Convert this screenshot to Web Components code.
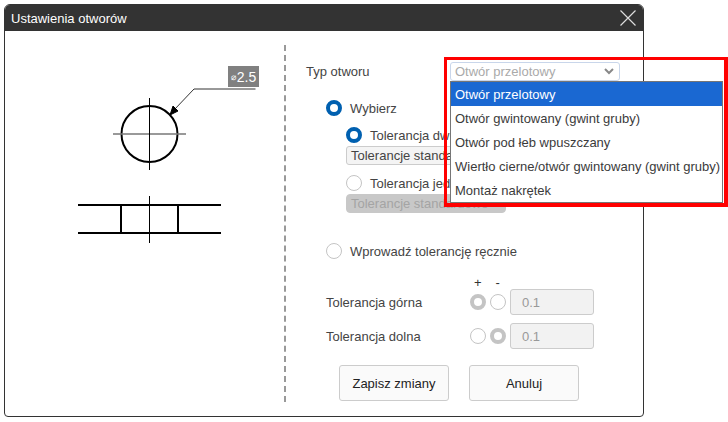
<!DOCTYPE html>
<html lang="pl">
<head>
<meta charset="utf-8">
<title>Ustawienia otworów</title>
<style>
  html, body { margin: 0; padding: 0; background: #fff; }
  body { font: 13px "Liberation Sans", Arial, sans-serif; color: #333; }
</style>
</head>
<body>
<template id="radio-tpl">
  <style>
    :host { display: flex; align-items: center; gap: 8px; height: 16px; color: #444; white-space: nowrap; }
    .dot { box-sizing: border-box; width: 16px; height: 16px; border-radius: 50%; background: #fff; border: 1px solid #c4c4c4; flex: none; }
    :host([on]) .dot { border: 4px solid #0060b0; }
    :host([on][off-color]) .dot { border-color: #c4c4c4; }
  </style>
  <span class="dot"></span><slot></slot>
</template>

<template id="select-tpl">
  <style>
    :host { display: flex; align-items: center; box-sizing: border-box; height: 19px; padding: 0 4px; border: 1px solid #ccc; border-radius: 3px; background: #f4f4f4; color: #444; white-space: nowrap; overflow: hidden; position: relative; }
    :host([variant="muted"]) { background: #fff; border-color: #c9d6ea; color: #aaa; }
    :host([variant="off"]) { background: #c8c8c8; border-color: #c8c8c8; border-radius: 4px; color: #a4a4a4; }
    svg { position: absolute; right: 5px; top: 5px; }
  </style>
  <slot></slot>
  <svg width="10" height="7" viewBox="0 0 10 7" fill="none" stroke="#888" stroke-width="2"><path d="M1 1l4 4 4-4"/></svg>
</template>

<template id="menu-tpl">
  <style>
    :host { display: block; box-sizing: border-box; position: absolute; left: 450px; top: 81px; z-index: 1; width: 273px; border: 1px solid #767676; background: #fff; color: #3b3b3b; }
  </style>
  <slot></slot>
</template>

<template id="item-tpl">
  <style>
    :host { display: flex; align-items: center; height: 24px; padding: 0 4px; white-space: nowrap; }
    :host([active]) { background: #1a68d2; color: #fff; }
  </style>
  <slot></slot>
</template>

<template id="mark-tpl">
  <style>
    :host { display: block; box-sizing: border-box; position: absolute; left: 444px; top: 57px; z-index: 2; width: 284px; height: 150px; border: solid #f00; border-width: 3px 4px 4px 3px; pointer-events: none; }
  </style>
</template>

<template id="row-tpl">
  <style>
    :host { display: flex; align-items: center; height: 26px; margin-left: 20px; color: #444; }
    .name { width: 144px; }
    .pair { display: flex; gap: 4px; margin-right: 4px; }
    .val { box-sizing: border-box; width: 84px; height: 26px; padding: 0 11px; display: flex; align-items: center; border: 1px solid #ccc; border-radius: 3px; background: #f2f2f2; color: #999; }
    ::slotted(hole-radio) { gap: 0; }
  </style>
  <span class="name"><slot></slot></span>
  <span class="pair"><slot name="radios"></slot></span>
  <span class="val"><slot name="value"></slot></span>
</template>

<template id="drawing-tpl">
  <style>
    :host { display: block; position: relative; width: 279px; height: 357px; flex: none; }
    svg { display: block; }
    .tag { position: absolute; left: 223px; top: 21px; width: 31px; height: 21px; display: flex; align-items: center; justify-content: center; background: #808080; color: #fff; font-size: 14px; }
    .tag i { font-style: normal; font-size: 9px; margin-right: 1px; }
  </style>
  <svg width="279" height="357" viewBox="5 45 279 357" fill="none">
    <path d="M255.500 89H194L174 110" stroke="#333"/>
    <path d="M170 115L173 106L178 111Z" fill="#000" stroke="#000"/>
    <circle cx="149.500" cy="134" r="28" stroke="#000" stroke-width="2"/>
    <path d="M113 134H186" stroke="#777" stroke-width="1.500"/>
    <path d="M149.500 98V170" stroke="#000"/>
    <path d="M78 205H221M78 233H221" stroke="#000" stroke-width="2"/>
    <rect x="121" y="205" width="57" height="28" stroke="#000" stroke-width="2"/>
    <path d="M149.500 196V243" stroke="#000"/>
  </svg>
  <span class="tag"><i>⌀</i>2.5</span>
</template>

<template id="dialog-tpl">
  <style>
    :host { display: block; box-sizing: border-box; width: 640px; height: 413px; margin: 4px 0 0 4px; border: 1px solid #333; border-radius: 6px 6px 4px 4px; background: #fff; overflow: hidden; }
    header { display: flex; align-items: center; justify-content: space-between; height: 26px; padding: 0 7px 0 6px; background: #333; color: #fff; }
    header svg { display: block; }
    .body { display: flex; box-sizing: border-box; height: 385px; padding-top: 14px; }
    .rule { flex: none; width: 0; height: 357px; border-left: 2px dashed #999; }
    .form { flex: 1; padding-left: 20px; }
    .typ { display: flex; align-items: center; justify-content: space-between; width: 314px; height: 19px; margin-top: 17px; color: #444; }
    .typ hole-select { width: 170px; }
    .group { display: flex; flex-direction: column; }
    .typ + .group { margin: 19px 0 0 20px; }
    .sub { margin: 11px 0 0 20px; width: 160px; }
    .sub hole-select { margin-top: 3px; }
    .sub + .sub { margin-top: 10px; }
    .manual { margin: 30px 0 0 20px; }
    .signs { display: flex; gap: 14px; height: 14px; margin: 16px 0 0 168px; color: #333; }
    .rows { display: flex; flex-direction: column; gap: 8px; }
    .actions { display: flex; gap: 20px; margin: 16px 0 0 33px; }
    button { box-sizing: border-box; width: 110px; height: 36px; border: 1px solid #ccc; border-radius: 3px; background: #fafafa; color: #222; font: inherit; padding: 0; }
  </style>
  <header>
    <slot name="title"></slot>
    <svg width="16" height="16" viewBox="0 0 16 16" stroke="#ddd" stroke-width="1.200"><path d="M.5 .5L15.500 15.500M15.500 .5L.5 15.500"/></svg>
  </header>
  <div class="body">
    <hole-drawing></hole-drawing>
    <div class="rule"></div>
    <div class="form">
      <div class="typ"><span>Typ otworu</span><hole-select variant="muted">Otwór przelotowy</hole-select></div>
      <div class="group">
        <hole-radio on>Wybierz</hole-radio>
        <div class="sub">
          <hole-radio on>Tolerancja dwustronna</hole-radio>
          <hole-select>Tolerancje standardowe</hole-select>
        </div>
        <div class="sub">
          <hole-radio>Tolerancja jednostronna</hole-radio>
          <hole-select variant="off">Tolerancje standardowe</hole-select>
        </div>
      </div>
      <hole-radio class="manual">Wprowadź tolerancję ręcznie</hole-radio>
      <div class="signs"><span>+</span><span>-</span></div>
      <div class="rows">
        <tol-row>Tolerancja górna
          <hole-radio slot="radios" on off-color></hole-radio><hole-radio slot="radios"></hole-radio>
          <span slot="value">0.1</span></tol-row>
        <tol-row>Tolerancja dolna
          <hole-radio slot="radios"></hole-radio><hole-radio slot="radios" on off-color></hole-radio>
          <span slot="value">0.1</span></tol-row>
      </div>
      <div class="actions"><button>Zapisz zmiany</button><button>Anuluj</button></div>
    </div>
  </div>
</template>

<hole-dialog>
  <span slot="title">Ustawienia otworów</span>
</hole-dialog>
<red-mark></red-mark>
<hole-menu>
  <hole-item active>Otwór przelotowy</hole-item>
  <hole-item>Otwór gwintowany (gwint gruby)</hole-item>
  <hole-item>Otwór pod łeb wpuszczany</hole-item>
  <hole-item>Wiertło cierne/otwór gwintowany (gwint gruby)</hole-item>
  <hole-item>Montaż nakrętek</hole-item>
</hole-menu>

<script>
class TemplatedElement extends HTMLElement {
  constructor() {
    super();
    const tpl = document.getElementById(this.constructor.templateId);
    this.attachShadow({ mode: 'open' }).appendChild(tpl.content.cloneNode(true));
  }
}

const parts = {
  'hole-radio': 'radio-tpl',
  'hole-select': 'select-tpl',
  'hole-menu': 'menu-tpl',
  'hole-item': 'item-tpl',
  'red-mark': 'mark-tpl',
  'tol-row': 'row-tpl',
  'hole-drawing': 'drawing-tpl',
  'hole-dialog': 'dialog-tpl',
};

Object.entries(parts).forEach(([tag, templateId]) => {
  customElements.define(tag, class extends TemplatedElement {
    static templateId = templateId;
  });
});
</script>
</body>
</html>
